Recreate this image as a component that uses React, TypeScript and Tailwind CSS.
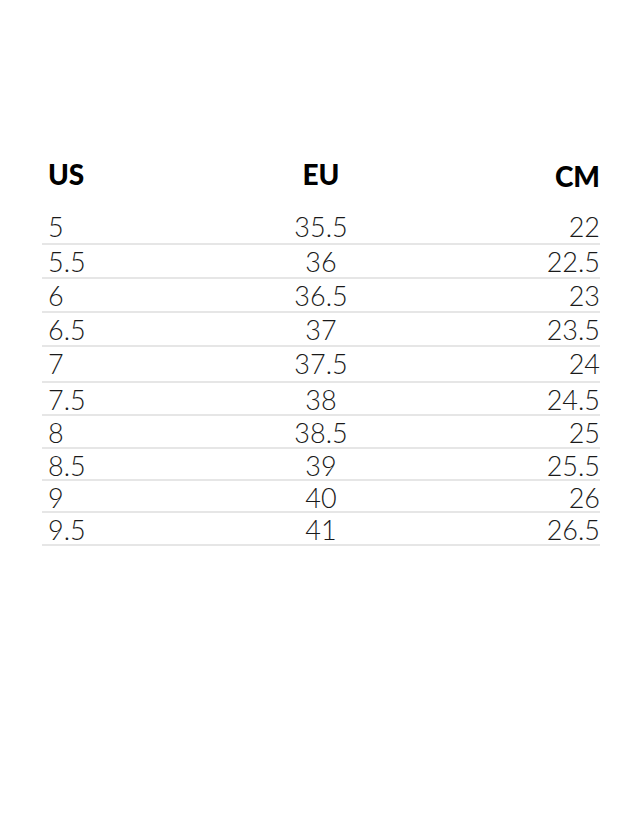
const sizes = [
  { us: "5", eu: "35.5", cm: "22", h: "h-[35px]" },
  { us: "5.5", eu: "36", cm: "22.5", h: "h-[34px]" },
  { us: "6", eu: "36.5", cm: "23", h: "h-[34px]" },
  { us: "6.5", eu: "37", cm: "23.5", h: "h-[34px]" },
  { us: "7", eu: "37.5", cm: "24", h: "h-[36px]" },
  { us: "7.5", eu: "38", cm: "24.5", h: "h-[33px]" },
  { us: "8", eu: "38.5", cm: "25", h: "h-[33px]" },
  { us: "8.5", eu: "39", cm: "25.5", h: "h-[32px]" },
  { us: "9", eu: "40", cm: "26", h: "h-[32px]" },
  { us: "9.5", eu: "41", cm: "26.5", h: "h-[33px]" },
];

export default function App() {
  return (
    <div className="min-h-[824px] w-full bg-white pt-[160px] font-['Lato','Liberation_Sans',sans-serif]">
      <div className="ml-[42px] w-[558px]">

        <div className="grid h-[50px] grid-cols-3 text-[28px] font-black leading-none text-black">
          <span className="pl-[6px]">US</span>
          <span className="text-center">EU</span>
          <span className="pt-[2px] text-right">CM</span>
        </div>

        {sizes.map((row) => (
          <div
            key={row.us}
            className={`grid grid-cols-3 border-b-2 border-[#e6e6e6] pt-[3px] text-[27px] font-light leading-none text-[#1a1a1a] ${row.h}`}
          >
            <span className="pl-[6px]">{row.us}</span>
            <span className="text-center">{row.eu}</span>
            <span className="text-right">{row.cm}</span>
          </div>
        ))}

      </div>
    </div>
  );
}
